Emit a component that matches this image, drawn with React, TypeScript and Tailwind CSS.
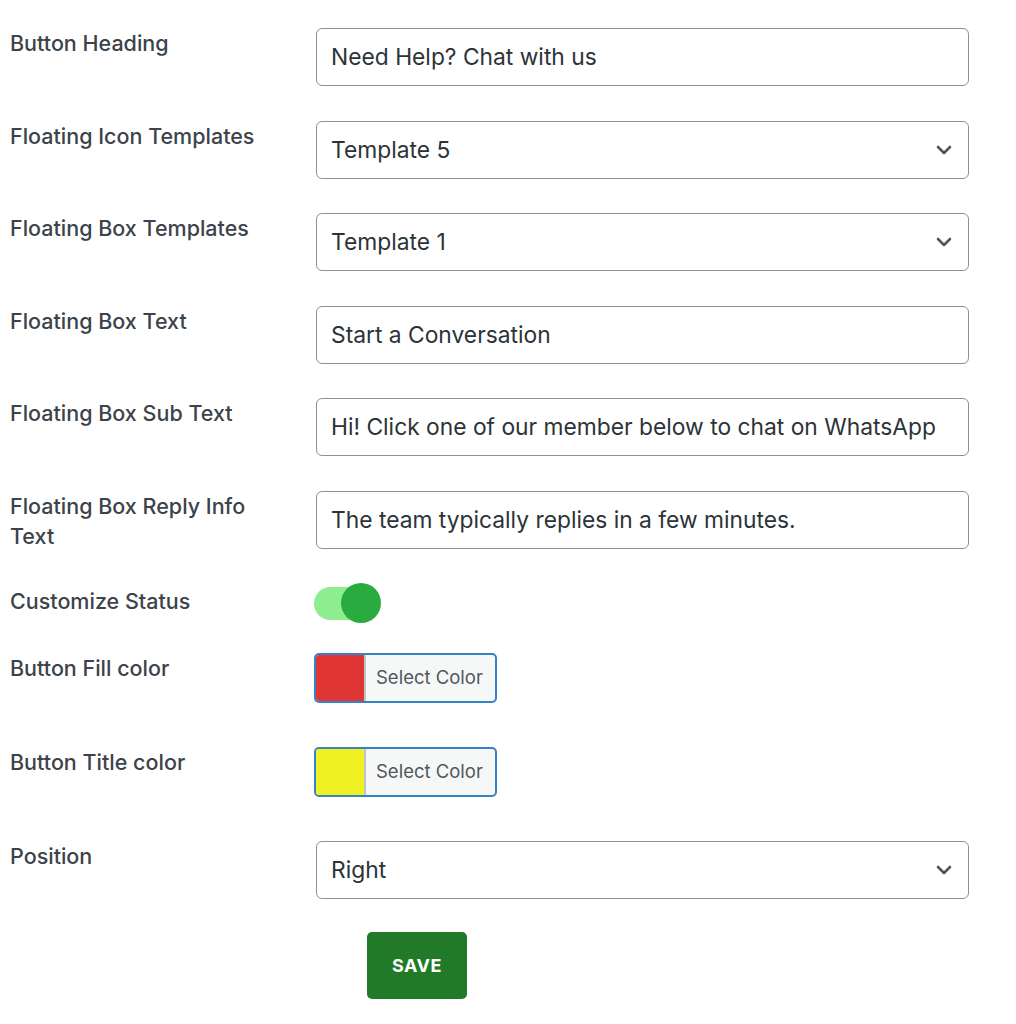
import { ChevronDown } from "lucide-react";

const font = { fontFamily: "Inter, 'Noto Sans', sans-serif" };

function Label({ children }: { children: React.ReactNode }) {
    return (
        <div className="w-[316px] shrink-0 pl-[10px] pr-[60px] text-[21.5px] leading-[30px] font-medium text-[#3c434a]">
            {children}
        </div>
    );
}

function TextField({ value }: { value: string }) {
    return (
        <div className="w-[653px] h-[58px] flex items-center border border-[#8c8f94] rounded-[6px] bg-white pl-[14px] text-[22.8px] text-[#2c3338]">
            {value}
        </div>
    );
}

function SelectField({ value }: { value: string }) {
    return (
        <div className="w-[653px] h-[58px] flex items-center justify-between border border-[#8c8f94] rounded-[6px] bg-white pl-[14px] pr-[12px] text-[22.8px] text-[#2c3338]">
            <span>{value}</span>
            <ChevronDown className="w-[24px] h-[24px] text-[#50575e]" strokeWidth={2.6} />
        </div>
    );
}

function ColorButton({ swatch }: { swatch: string }) {
    return (
        <div className="ml-[-2px] w-[183px] h-[50px] flex border-2 border-[#3582c4] rounded-[5px] overflow-hidden bg-[#f6f7f7]">
            <div className={`w-[50px] h-full border-r-2 border-[#c3c4c7] ${swatch}`} />
            <div className="flex-1 flex items-center pl-[10px] text-[18.5px] text-[#50575e]">
                Select Color
            </div>
        </div>
    );
}

export default function App() {
    const rows = [
        { label: "Button Heading", value: "Need Help? Chat with us", select: false },
        { label: "Floating Icon Templates", value: "Template 5", select: true },
        { label: "Floating Box Templates", value: "Template 1", select: true },
        { label: "Floating Box Text", value: "Start a Conversation", select: false },
        {
            label: "Floating Box Sub Text",
            value: "Hi! Click one of our member below to chat on WhatsApp",
            select: false,
        },
        {
            label: "Floating Box Reply Info Text",
            value: "The team typically replies in a few minutes.",
            select: false,
        },
    ];

    return (
        <div className="min-h-screen bg-white pt-[28px]" style={font}>
            <div className="flex flex-col gap-[34.6px]">
                {rows.map((row) => (
                    <div key={row.label} className="flex items-start">
                        <Label>{row.label}</Label>
                        {row.select ? (
                            <SelectField value={row.value} />
                        ) : (
                            <TextField value={row.value} />
                        )}
                    </div>
                ))}
            </div>

            {/* Customize Status */}
            <div className="flex items-start mt-[32px]">
                <div className="pt-[3px]">
                    <Label>Customize Status</Label>
                </div>
                <div className="relative ml-[-2px] w-[68px] h-[40px]">
                    <div className="absolute left-0 top-[4px] w-[60px] h-[33px] rounded-full bg-[#8ded8f]" />
                    <div className="absolute left-[27px] top-0 w-[40px] h-[40px] rounded-full bg-[#2aab3f]" />
                </div>
            </div>

            {/* Button Fill color */}
            <div className="flex items-start mt-[30px]">
                <Label>Button Fill color</Label>
                <ColorButton swatch="bg-[#e03535]" />
            </div>

            {/* Button Title color */}
            <div className="flex items-start mt-[44px]">
                <Label>Button Title color</Label>
                <ColorButton swatch="bg-[#eff123]" />
            </div>

            {/* Position */}
            <div className="flex items-start mt-[44px]">
                <Label>Position</Label>
                <SelectField value="Right" />
            </div>

            <div className="mt-[33px] pl-[367px] pb-6">
                <button className="w-[100px] h-[67px] rounded-[5px] bg-[#217a27] text-white text-[18px] font-bold tracking-[0.5px]">
                    SAVE
                </button>
            </div>
        </div>
    );
}
